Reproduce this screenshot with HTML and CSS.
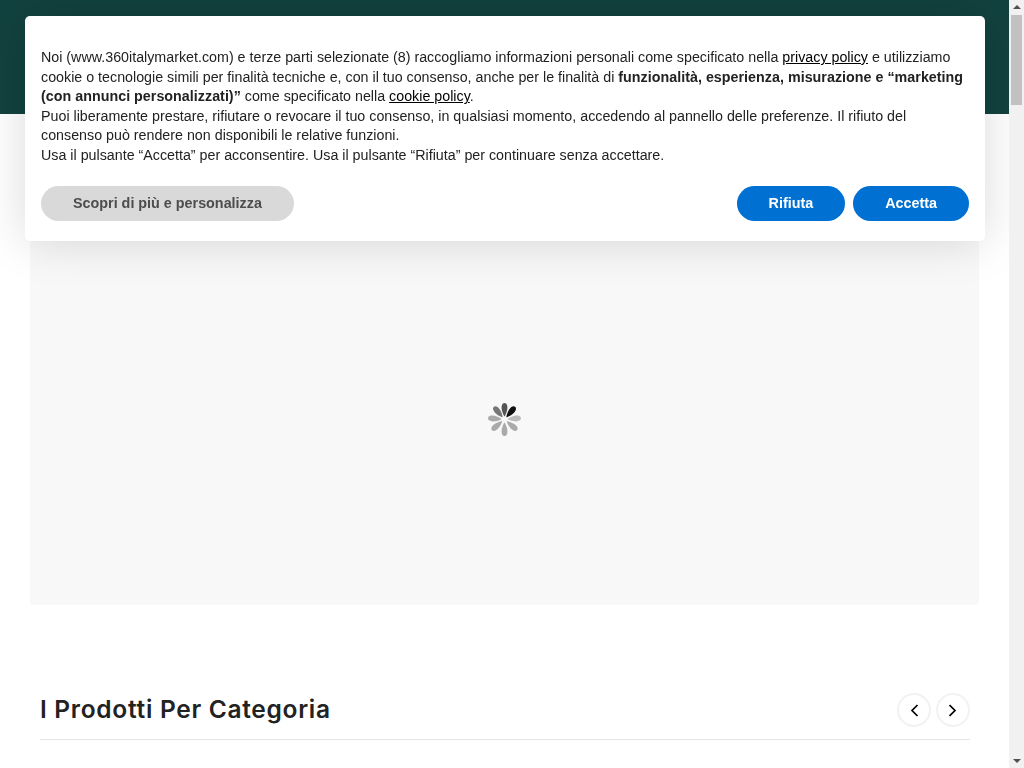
FILE: index.html
```html
<!DOCTYPE html>
<html lang="it">
<head>
    <meta charset="UTF-8">
    <meta name="viewport" content="width=device-width, initial-scale=1.0">
    <title>360 Italy Market</title>
    <link rel="stylesheet" href="styles.css">
</head>
<body>
    <header class="site-header"></header>

    <main class="page">
        <section class="banner">
            <svg class="spinner" width="33" height="33" viewBox="0 0 34 34" aria-hidden="true">
                <defs>
                    <path id="petal" d="M17 0C19.500 0 20 3 20 5 20 8 18 13 17 14 16 13 14 8 14 5 14 3 14.500 0 17 0z"/>
                </defs>
                <use href="#petal" class="p1"/>
                <use href="#petal" class="p2" transform="rotate(40 17 17)"/>
                <use href="#petal" class="p3" transform="rotate(85 17 17)"/>
                <use href="#petal" class="p4" transform="rotate(130 17 17)"/>
                <use href="#petal" class="p5" transform="rotate(180 17 17)"/>
                <use href="#petal" class="p6" transform="rotate(230 17 17)"/>
                <use href="#petal" class="p7" transform="rotate(275 17 17)"/>
                <use href="#petal" class="p8" transform="rotate(320 17 17)"/>
            </svg>
        </section>

        <section class="products">
            <div class="section-head">
                <h2>I Prodotti Per Categoria</h2>
                <div class="arrows">
                    <button class="arrow" aria-label="Precedente">
                        <svg width="9" height="13" viewBox="0 0 9 13"><path d="M7.500 1L2 6.500l5.500 5.500"/></svg>
                    </button>
                    <button class="arrow" aria-label="Successivo">
                        <svg width="9" height="13" viewBox="0 0 9 13"><path d="M.5 1L6 6.500.5 12"/></svg>
                    </button>
                </div>
            </div>
        </section>
    </main>

    <div class="cookie-banner">
        <p>Noi (www.360italymarket.com) e terze parti selezionate (8) raccogliamo informazioni personali come specificato nella <a href="#">privacy policy</a> e utilizziamo cookie o tecnologie simili per finalità tecniche e, con il tuo consenso, anche per le finalità di <b>funzionalità, esperienza, misurazione e “marketing (con annunci personalizzati)”</b> come specificato nella <a href="#">cookie policy</a>.<br>
        Puoi liberamente prestare, rifiutare o revocare il tuo consenso, in qualsiasi momento, accedendo al pannello delle preferenze. Il rifiuto del consenso può rendere non disponibili le relative funzioni.<br>
        Usa il pulsante “Accetta” per acconsentire. Usa il pulsante “Rifiuta” per continuare senza accettare.</p>
        <div class="cookie-actions">
            <button class="pill pill-grey">Scopri di più e personalizza</button>
            <div class="cookie-choice">
                <button class="pill pill-blue">Rifiuta</button>
                <button class="pill pill-blue">Accetta</button>
            </div>
        </div>
    </div>

    <div class="scrollbar" aria-hidden="true">
        <span class="scroll-btn scroll-up"></span>
        <span class="scroll-thumb"></span>
        <span class="scroll-btn scroll-down"></span>
    </div>
</body>
</html>
```

FILE: styles.css
```css
body {
    margin: 0;
    padding-right: 15px;
    font-family: "Liberation Sans", Arial, sans-serif;
    background: #fff;
    color: #222;
}
.site-header {
    height: 114px;
    background: #12423f;
}
.page {
    padding: 0 30px;
}
.banner {
    height: 491px;
    background: #f8f8f8;
    border-radius: 4px;
    display: flex;
    align-items: center;
    justify-content: center;
}
.spinner {
    display: block;
    margin-top: 120px;
}
.p1 { fill: #555; }
.p2 { fill: #111; }
.p3 { fill: #bbb; }
.p4 { fill: #aaa; }
.p5 { fill: #aaa; }
.p6 { fill: #aaa; }
.p7 { fill: #aaa; }
.p8 { fill: #777; }
.products {
    padding: 88px 9px 0 10px;
}
.section-head {
    display: flex;
    align-items: center;
    justify-content: space-between;
    padding-bottom: 12px;
    border-bottom: 1px solid #e5e5e5;
}
.section-head h2 {
    margin: 0 0 2px;
    font-family: Inter, sans-serif;
    font-size: 24.5px;
    font-weight: 600;
    letter-spacing: 0.7px;
    color: #222;
}
.arrows {
    display: flex;
    gap: 5px;
}
.arrow {
    width: 34px;
    height: 34px;
    padding: 0;
    border: 2px solid #f2f2f2;
    border-radius: 50%;
    background: #fff;
    display: flex;
    align-items: center;
    justify-content: center;
}
.arrow path {
    fill: none;
    stroke: #000;
    stroke-width: 1.7;
}
.cookie-banner {
    position: fixed;
    top: 16px;
    left: 25px;
    width: 928px;
    padding: 32px 16px 20px;
    background: #fff;
    border-radius: 5px;
    box-shadow: 0 0 48px rgba(0,0,0,0.15);
    font-size: 14.27px;
    line-height: 19.6px;
    color: #222;
}
.cookie-banner p {
    margin: 0;
}
.cookie-banner b {
    letter-spacing: 0.03px;
}
.cookie-banner a {
    color: #000;
    text-decoration: underline;
}
.cookie-actions {
    display: flex;
    justify-content: space-between;
    margin-top: 20px;
}
.cookie-choice {
    display: flex;
    gap: 8px;
}
.pill {
    height: 35px;
    padding: 0 32px;
    border: none;
    border-radius: 18px;
    font-family: "Liberation Sans", Arial, sans-serif;
    font-size: 14.35px;
    font-weight: 700;
}
.pill-grey {
    background: #d9d9d9;
    color: #4d4d4d;
}
.pill-blue {
    background: #0070d2;
    color: #fff;
}
.scrollbar {
    position: fixed;
    top: 0;
    right: 0;
    bottom: 0;
    width: 15px;
    background: #f1f1f1;
    display: flex;
    flex-direction: column;
    align-items: center;
}
.scroll-btn {
    width: 0;
    height: 0;
    border-left: 4px solid transparent;
    border-right: 4px solid transparent;
}
.scroll-up {
    margin-top: 5px;
    border-bottom: 4px solid #505050;
}
.scroll-thumb {
    width: 11px;
    height: 90px;
    margin-top: 6px;
    background: #c1c1c1;
}
.scroll-down {
    margin-top: auto;
    margin-bottom: 5px;
    border-top: 4px solid #505050;
}
```
